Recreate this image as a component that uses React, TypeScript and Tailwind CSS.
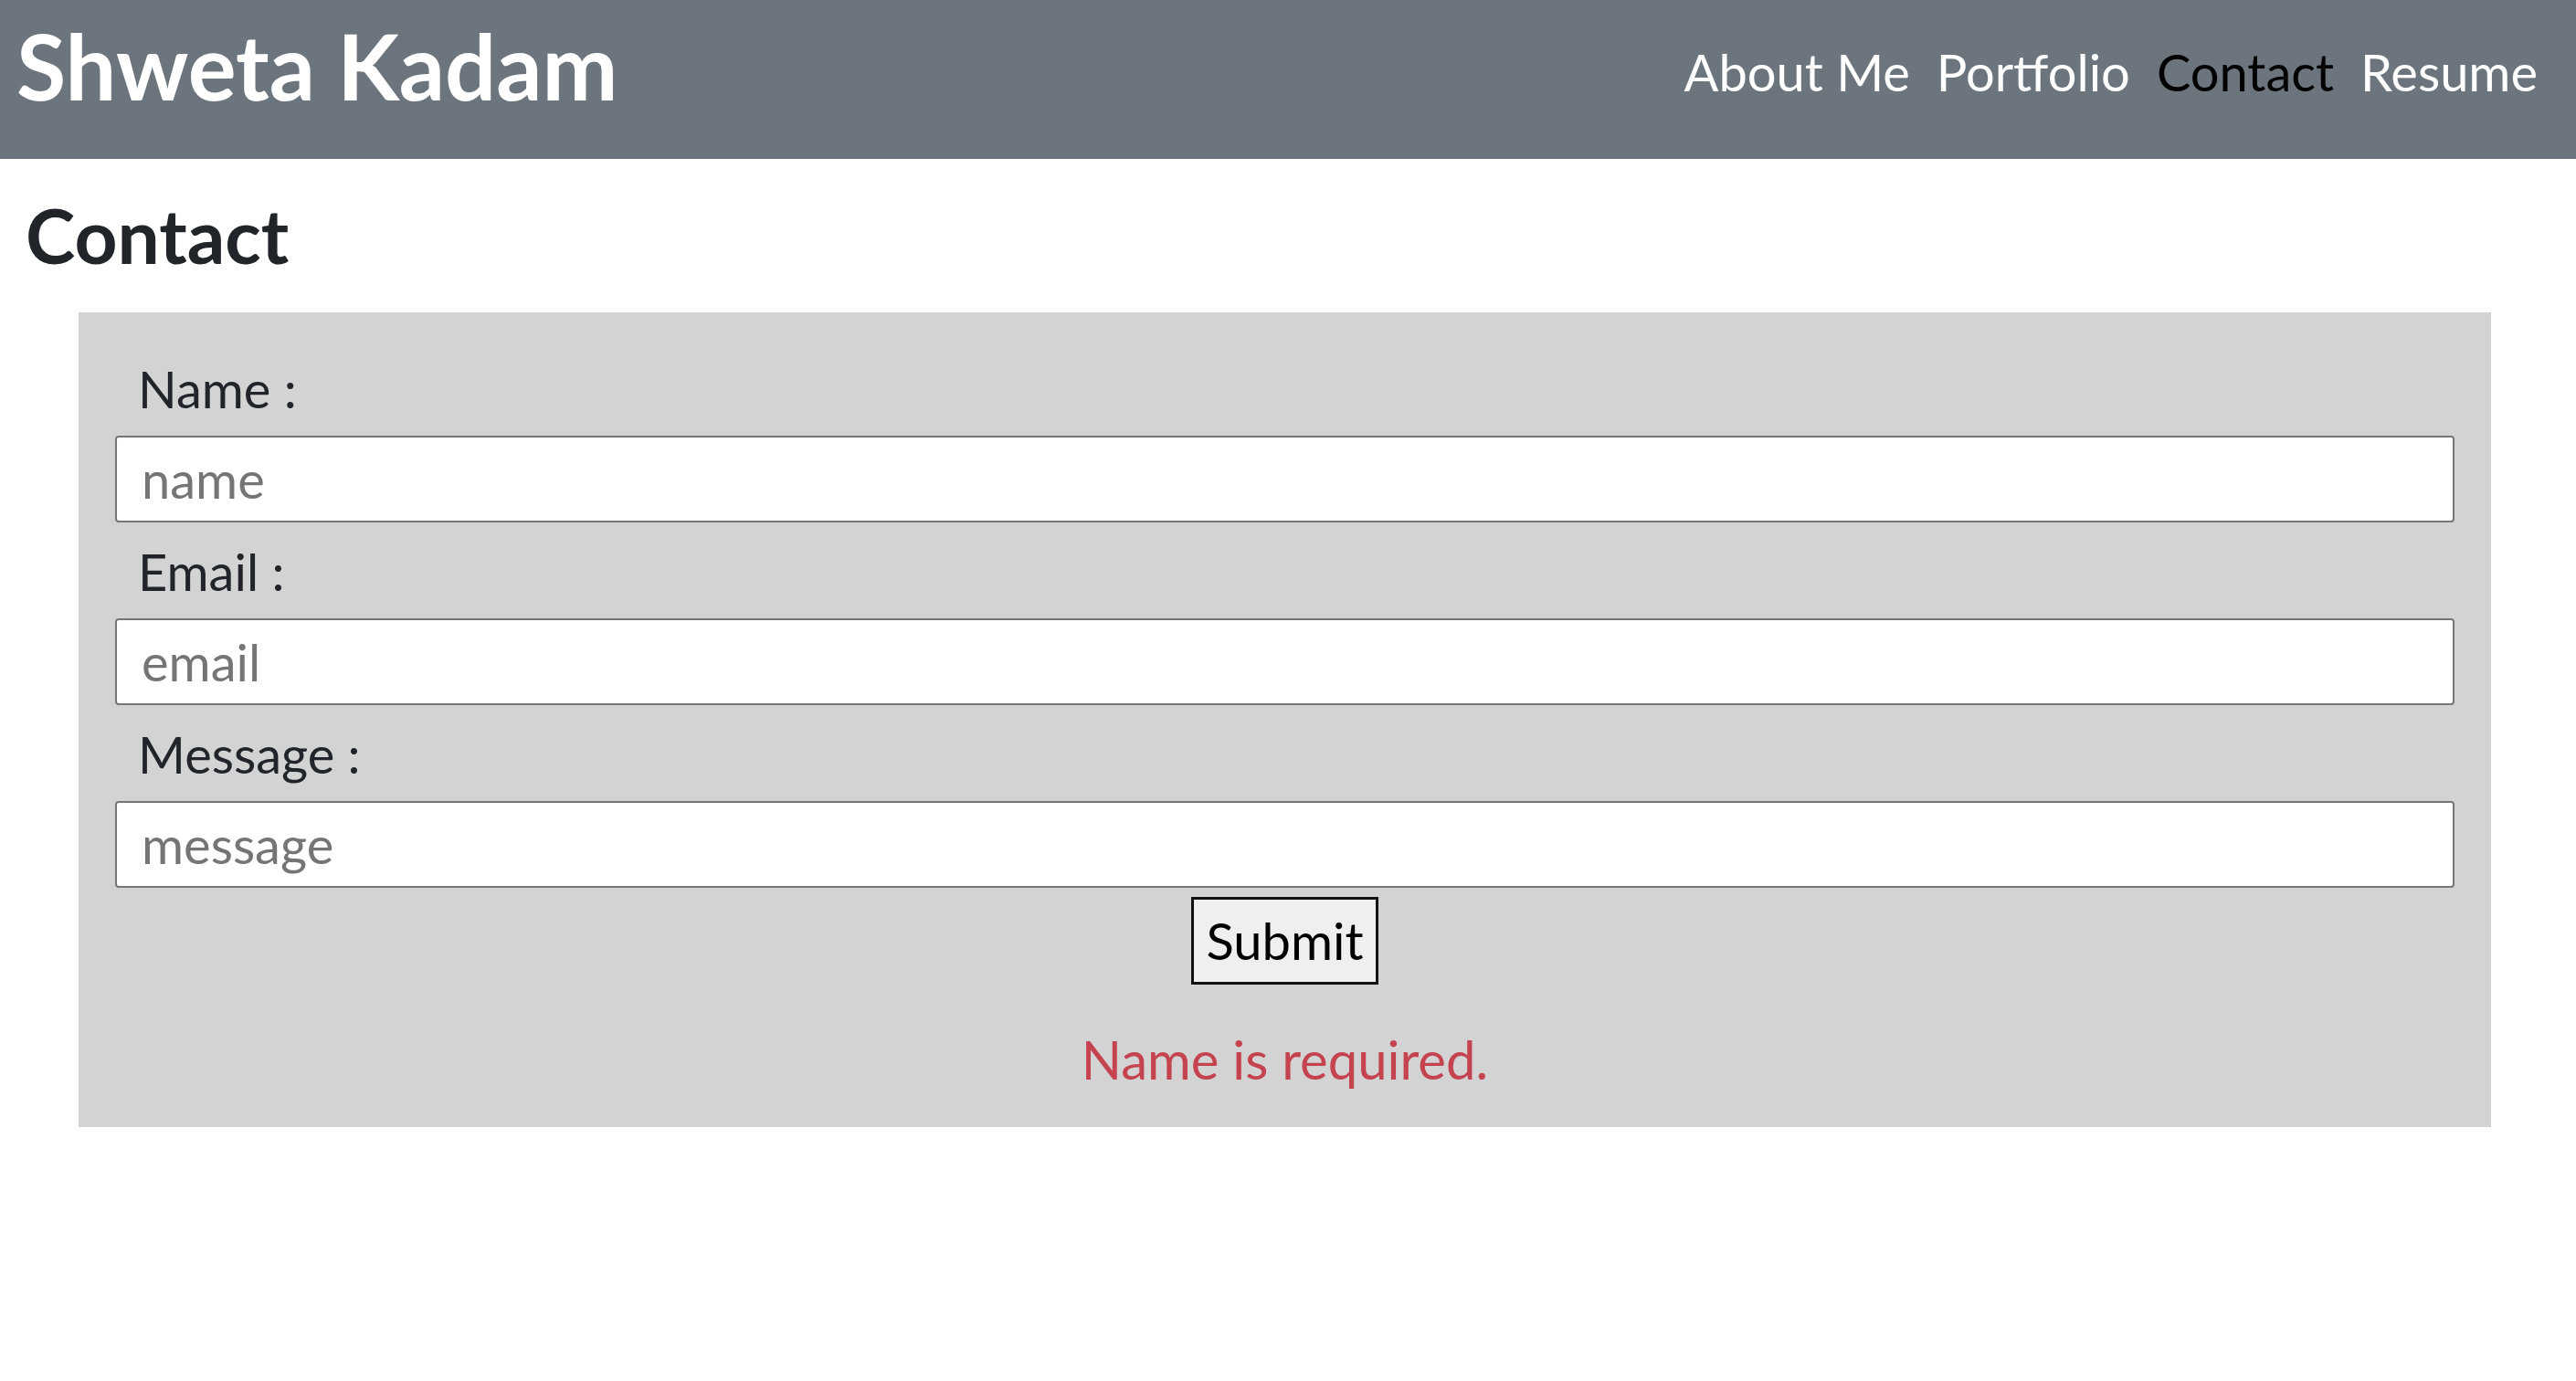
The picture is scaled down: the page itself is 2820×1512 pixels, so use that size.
import React from 'react';

const navLinks = ['About Me', 'Portfolio', 'Contact', 'Resume'];

const Field = ({ label, placeholder }: { label: string; placeholder: string }) => (
  <>
    <label className="pl-[25px] text-[56px] leading-[84px] text-[#212529] mb-[9px]">{label}</label>
    <input
      type="text"
      placeholder={placeholder}
      className="h-[95px] w-full rounded-[4px] border-2 border-[#767676] bg-white px-[27px] text-[56px] text-black placeholder:text-[#757575] outline-none mb-[12px]"
    />
  </>
);

const App = () => {
  return (
    <div className="min-h-screen bg-white font-['Lato',sans-serif]">
      <header className="h-[174px] bg-[#6c757d] flex items-start justify-between pl-[18px] pr-[42px]">
        <h1 className="mt-[13px] text-[99px] leading-[1.2] font-bold text-white">Shweta Kadam</h1>
        <nav className="mt-[37px] flex gap-[29px]">
          {navLinks.map((link) => (
            <a
              key={link}
              href="#"
              className={`text-[56px] leading-[84px] ${link === 'Contact' ? 'text-black' : 'text-white'}`}
            >
              {link}
            </a>
          ))}
        </nav>
      </header>

      <main>
        <h2 className="mt-[34px] pl-[28px] text-[82px] leading-[1.2] font-bold text-[#212529]">Contact</h2>

        <form className="mt-[36px] ml-[86px] mr-[93px] bg-[#d3d3d3] px-[40px] pt-[42px] pb-[32px] flex flex-col">
          <Field label="Name :" placeholder="name" />
          <Field label="Email :" placeholder="email" />
          <Field label="Message :" placeholder="message" />
          <div className="flex justify-center -mt-[2px]">
            <button
              type="button"
              className="h-[96px] w-[205px] border-[3px] border-[#111] bg-[#efefef] text-[56px] text-black"
            >
              Submit
            </button>
          </div>
          <p className="mt-[40px] text-center text-[58px] leading-[84px] text-[#c5434f]">Name is required.</p>
        </form>
      </main>
    </div>
  );
};

export default App;
